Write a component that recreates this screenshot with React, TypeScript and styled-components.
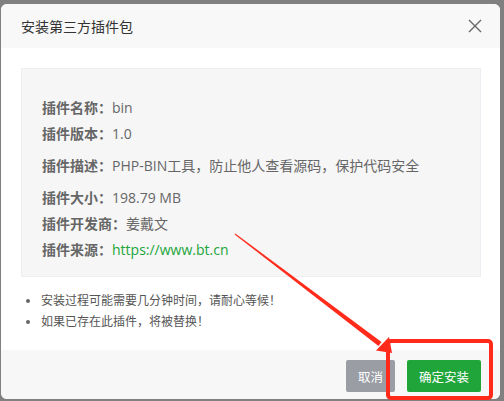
import styled, { createGlobalStyle } from "styled-components";

const GlobalStyle = createGlobalStyle`
  html, body {
    margin: 0;
    padding: 0;
    background: #808080;
  }
  body {
    font-family: "Open Sans", "Noto Sans CJK SC", sans-serif;
  }
`;

interface IField {
  label: string,
  value: string,
  link?: boolean,
  spaced?: boolean,
}

const fields: IField[] = [
  { label: "插件名称：", value: "bin" },
  { label: "插件版本：", value: "1.0" },
  { label: "插件描述：", value: "PHP-BIN工具，防止他人查看源码，保护代码安全", spaced: true },
  { label: "插件大小：", value: "198.79 MB", spaced: true },
  { label: "插件开发商：", value: "姜戴文" },
  { label: "插件来源：", value: "https://www.bt.cn", link: true },
];

const tips = ["安装过程可能需要几分钟时间，请耐心等候！", "如果已存在此插件，将被替换！"];

const Backdrop = styled.div`
  position: relative;
  width: 504px;
  height: 401px;
  box-sizing: border-box;
  padding: 4px 4px 2px 1px;
  background: #808080;
  overflow: hidden;
`;

const Dialog = styled.div`
  width: 499px;
  height: 395px;
  background: #fff;
  border-radius: 6px;
  overflow: hidden;
  display: flex;
  flex-direction: column;
`;

const Header = styled.header`
  height: 44px;
  flex-shrink: 0;
  background: #f8f8f8;
  padding: 0 18px 0 20px;
  display: flex;
  align-items: center;
  justify-content: space-between;
`;

const Title = styled.h1`
  margin: 0;
  font-size: 14px;
  font-weight: normal;
  color: #333;
`;

const Close = styled.button`
  width: 14px;
  height: 14px;
  padding: 0;
  border: none;
  background: none;
  display: flex;
  cursor: pointer;
`;

const Body = styled.div`
  padding: 20px 19px 0 20px;
`;

const InfoBox = styled.div`
  background: #f6f6f6;
  border: 1px solid #eceef4;
  padding: 26px 20px 13px;
`;

const Row = styled.div<{ $spaced?: boolean }>`
  font-size: 14px;
  line-height: 26px;
  color: #666;
  margin-top: ${(props) => (props.$spaced ? "6px" : "0")};
  white-space: nowrap;
`;

const Label = styled.span`
  font-weight: bold;
`;

const Source = styled.a`
  color: #20a53a;
  text-decoration: none;
`;

const Tips = styled.ul`
  margin: 13px 0 0;
  padding: 0 0 0 20px;
  font-size: 12px;
  line-height: 21px;
  color: #555;
  li::marker {
    color: #666;
  }
`;

const Footer = styled.footer`
  margin-top: auto;
  background: #f7f7f7;
  padding: 10px 19px 7px 20px;
  display: flex;
  justify-content: flex-end;
  gap: 12px;
`;

const Button = styled.button<{ $primary?: boolean }>`
  height: 32px;
  padding: 0 12px;
  border: none;
  border-radius: 2px;
  font-family: inherit;
  font-size: 12.5px;
  color: #fff;
  background: ${(props) => (props.$primary ? "#20a53a" : "#9a9da4")};
  cursor: pointer;
`;

const Annotation = styled.svg`
  position: absolute;
  left: 0;
  top: 0;
  pointer-events: none;
`;

function App() {
  return (
    <Backdrop>
      <GlobalStyle />
      <Dialog>
        <Header>
          <Title>安装第三方插件包</Title>
          <Close aria-label="关闭">
            <svg width="14" height="14" viewBox="0 0 14 14">
              <path d="M1 1L13 13M13 1L1 13" stroke="#666" strokeWidth="1.4" fill="none" />
            </svg>
          </Close>
        </Header>
        <Body>
          <InfoBox>
            {fields.map((f) => (
              <Row key={f.label} $spaced={f.spaced}>
                <Label>{f.label}</Label>
                {f.link ? <Source href="#">{f.value}</Source> : f.value}
              </Row>
            ))}
          </InfoBox>
          <Tips>
            {tips.map((t) => (
              <li key={t}>{t}</li>
            ))}
          </Tips>
        </Body>
        <Footer>
          <Button>取消</Button>
          <Button $primary>确定安装</Button>
        </Footer>
      </Dialog>
      <Annotation width="504" height="401" viewBox="0 0 504 401">
        <polygon points="234.7,234.4 235.3,233.6 381.5,342 378.5,346" fill="#ff2a1a" />
        <polygon points="392,353 376,350.5 389,337" fill="#ff2a1a" />
        <rect x="388" y="341" width="103" height="57" rx="3" fill="none" stroke="#ff2a1a" strokeWidth="4" />
      </Annotation>
    </Backdrop>
  );
}

export default App;
